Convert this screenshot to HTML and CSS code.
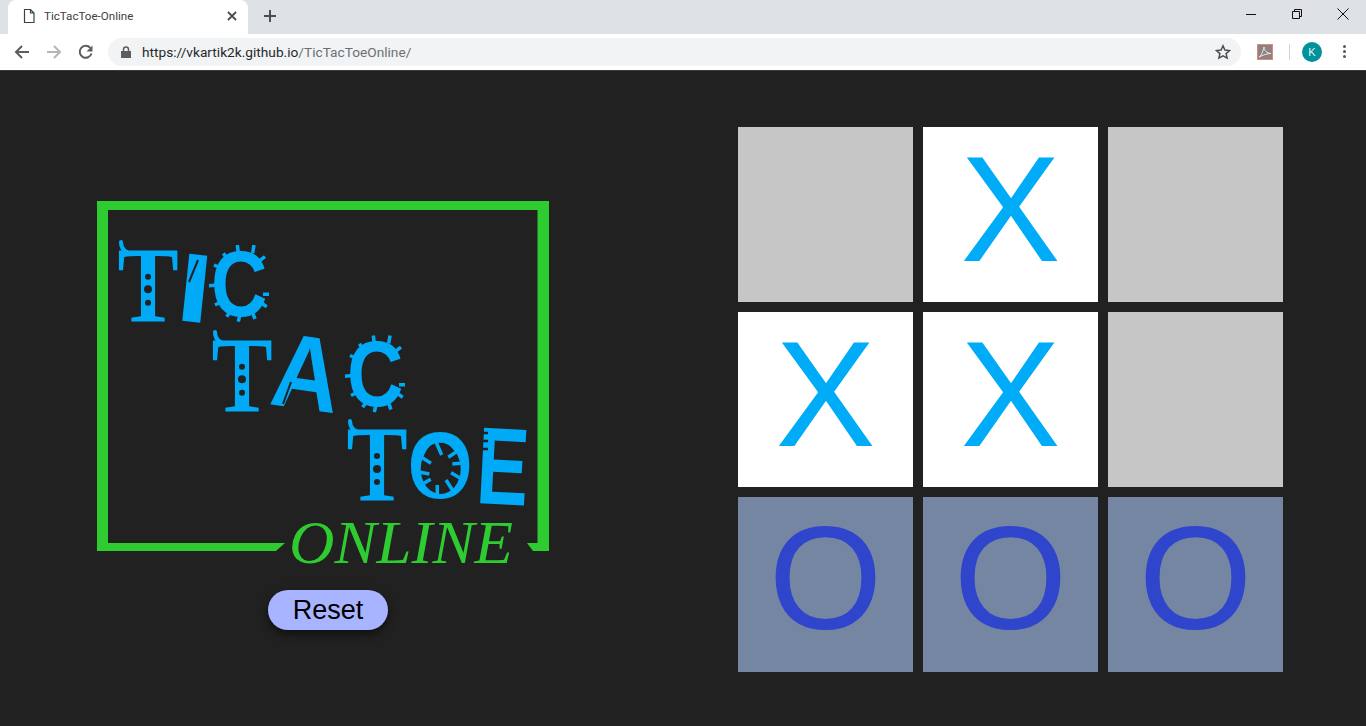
FILE: index.html
```html
<!DOCTYPE html>
<html lang="en">
<head>
<meta charset="utf-8">
<title>TicTacToe-Online</title>
<link rel="stylesheet" href="styles.css">
</head>
<body>
<div class="browser">
  <div class="tabstrip">
    <div class="tab">
      <svg class="tab-icon" width="16" height="16" viewBox="0 0 16 16"><path class="ic-thin" d="M3.500 1.500h6l3.500 3.500v9.500h-9.500zM9.500 1.500v3.500h3.500"/></svg>
      <span class="tab-title">TicTacToe-Online</span>
      <svg class="tab-close" width="10" height="10" viewBox="0 0 10 10"><path class="ic-x" d="M1 1l8 8M9 1l-8 8"/></svg>
    </div>
    <svg class="new-tab" width="14" height="14" viewBox="0 0 14 14"><path class="ic-plus" d="M7 1v12M1 7h12"/></svg>
    <div class="win-controls">
      <svg width="12" height="12" viewBox="0 0 12 12"><path class="ic-win" d="M1 6.500h10"/></svg>
      <svg width="12" height="12" viewBox="0 0 12 12"><path class="ic-win" d="M1.500 3.500h7v7h-7zM3.500 3.500v-2h7v7h-2"/></svg>
      <svg class="win-close" width="14" height="14" viewBox="0 0 14 14"><path class="ic-win" d="M1.500 1.500l11 11M12.500 1.500l-11 11"/></svg>
    </div>
  </div>
  <div class="toolbar">
    <svg class="nav" width="16" height="16" viewBox="0 0 16 16"><path class="ic-nav" d="M15 8H2M8 2L2 8l6 6"/></svg>
    <svg class="nav" width="16" height="16" viewBox="0 0 16 16"><path class="ic-nav ic-off" d="M1 8h13M8 2l6 6-6 6"/></svg>
    <svg class="nav" width="16" height="16" viewBox="0 0 16 16"><path class="ic-nav" d="M13.500 9.500A6 6 0 1 1 12.300 3.800"/><path class="ic-fill" d="M14.500 1.500v6h-6z"/></svg>
    <div class="omnibox">
      <svg class="lock" width="10" height="12" viewBox="0 0 10 12"><path class="ic-fill" d="M0 5h10v7H0z"/><path class="ic-lock" d="M2.500 5V3.400a2.500 2.500 0 0 1 5 0V5"/></svg>
      <span class="url"><span class="url-main">https://vkartik2k.github.io</span>/TicTacToeOnline/</span>
      <svg class="star" width="16" height="16" viewBox="0 0 16 16"><path class="ic-star" d="M8 1.800l1.900 4.200 4.600.5-3.400 3.100 1 4.500L8 11.800l-4.100 2.300 1-4.500-3.400-3.100 4.600-.5z"/></svg>
    </div>
    <div class="pdf-ext"><svg width="14" height="14" viewBox="0 0 14 14"><path class="ic-pdf" d="M1 12c2-1 4-5 5-10 .5 4 2.500 6 7 6.500-4 0-8 1.500-12 3.500z"/></svg></div>
    <div class="divider"></div>
    <div class="avatar">K</div>
    <div class="menu-dots"><i></i><i></i><i></i></div>
  </div>
</div>
<main class="page">
  <section class="side">
    <svg class="logo" width="462" height="379" viewBox="0 0 462 379">
      <path class="frame" d="M0 0H452V350H436L430 342H440.500V9H11V342H188L179 350H0z"/>

      <text class="lt-serif" transform="translate(20.400 120) scale(.85 1)">T</text>
      <path class="flourish" d="M24 41c0 8 5 11 12 12"/>
      <circle class="hole" cx="51" cy="75.700" r="3"/><circle class="hole" cx="51" cy="88.300" r="4"/><circle class="hole" cx="51" cy="101.700" r="3"/>
      <text class="lt" transform="translate(77 119) rotate(6) scale(1.250 .98)">I</text>
      <path class="holeline" d="M101 59l-9 22"/>
      <text class="lt" transform="translate(114 115) scale(.78 .93)">C</text>
      <path class="spikes" transform="translate(143 82.500)" d="M-2.700-38.500l1 8M14-38.500l-1.300 8M-16.700-30.200l4 5M25-26.800l-6 4.500M-26-18.500l7 3M-31 2.200l8-.7M-25 21.500l6-3M-13.300 33.200l3.300-5M-1.700 38.200L0 31M15 35.500l-2.300-6M26.700 23.200l-5-3.400M29 10.800h-6"/>

      <text class="lt-serif" transform="translate(114.400 210) scale(.85 1)">T</text>
      <path class="flourish" d="M118 131c0 8 5 11 12 12"/>
      <circle class="hole" cx="145" cy="165.700" r="3"/><circle class="hole" cx="145" cy="178.300" r="4"/><circle class="hole" cx="145" cy="191.700" r="3"/>
      <text class="lt" transform="translate(171 203) rotate(8) scale(.94 1.050)">A</text>
      <path class="holeline" d="M194 181l-8 22"/>
      <text class="lt" transform="translate(250 205) scale(.78 .93)">C</text>
      <path class="spikes" transform="translate(279 173)" d="M-2.700-38.500l1 8M14-38.500l-1.300 8M-16.700-30.200l4 5M25-26.800l-6 4.500M-26-18.500l7 3M-31 2.200l8-.7M-25 21.500l6-3M-13.300 33.200l3.300-5M-1.700 38.200L0 31M15 35.500l-2.300-6M26.700 23.200l-5-3.400M29 10.800h-6"/>

      <text class="lt-serif" transform="translate(249.400 299) scale(.85 1)">T</text>
      <path class="flourish" d="M253 220c0 8 5 11 12 12"/>
      <circle class="hole" cx="280" cy="255" r="3"/><circle class="hole" cx="280" cy="268" r="4"/><circle class="hole" cx="280" cy="281" r="3"/>
      <text class="lt" transform="translate(310.600 297) scale(.84 .95)">O</text>
      <ellipse class="o-hole" cx="343.700" cy="268" rx="20" ry="25"/>
      <path class="spokes" d="M339 241l5.700 13M362 249l-10.700 7.300M366 262l-10.700 1M363 277l-9-5.300M356 290l-7-11M340.300 295v-11M324 284l9.700-5.700M322 271l10.300 2M324 256l10 6.300"/>
      <text class="lt" transform="translate(378 302) rotate(3) scale(.78 1.100)">E</text>
      <path class="e-notch" d="M382 232h9M382 240h9M382 248h9"/>

      <text class="online" x="192" y="362" textLength="224" lengthAdjust="spacingAndGlyphs">ONLINE</text>
    </svg>
    <button class="reset" type="button">Reset</button>
  </section>
  <section class="board">
    <div class="cell"></div>
    <div class="cell x">X</div>
    <div class="cell"></div>
    <div class="cell x">X</div>
    <div class="cell x">X</div>
    <div class="cell"></div>
    <div class="cell o">O</div>
    <div class="cell o">O</div>
    <div class="cell o">O</div>
  </section>
</main>
</body>
</html>
```
FILE: styles.css
```css
* { box-sizing: border-box; }
html, body { margin: 0; height: 100%; overflow: hidden; }
body { background: #212121; font-family: "Liberation Sans", Arial, sans-serif; display: flex; flex-direction: column; }

.tabstrip { height: 34px; background: #dee1e6; display: flex; align-items: flex-start; }
.tab { width: 240px; height: 34px; margin-left: 8px; background: #fff; border-radius: 8px 8px 0 0; display: flex; align-items: center; padding: 0 11px 2px 14px; }
.tab-icon { margin-left: -1px; }
.tab-title { font: 11.600px Roboto, "Liberation Sans", sans-serif; color: #3c4043; margin-left: 7px; flex: 1; }
.new-tab { margin: 9px 0 0 15px; }
.win-controls { margin-left: auto; display: flex; align-items: center; gap: 34px; padding: 7px 16px 0 0; }
.win-close { margin-left: -1px; }
.ic-thin { fill: none; stroke: #3c4043; stroke-width: 1.200; }
.ic-x { fill: none; stroke: #4a4d51; stroke-width: 1.800; }
.ic-plus { fill: none; stroke: #4a4d51; stroke-width: 2; }
.ic-win { fill: none; stroke: #111; stroke-width: 1; }

.toolbar { height: 37px; background: #fff; display: flex; align-items: center; border-bottom: 1px solid #3a3a3a; padding: 0 0 1px 14px; }
.nav { margin-right: 16px; }
.ic-nav { fill: none; stroke: #5a5d61; stroke-width: 2; }
.ic-off { stroke: #b4b7ba; }
.ic-fill { fill: #5a5d61; }
.ic-lock { fill: none; stroke: #5a5d61; stroke-width: 1.500; }
.omnibox { width: 1133px; height: 28px; margin-left: -2px; background: #f1f3f4; border-radius: 14px; display: flex; align-items: center; padding: 0 10px 0 13px; }
.url { font: 13.700px Roboto, "Liberation Sans", sans-serif; color: #6b7075; margin-left: 11px; flex: 1; white-space: nowrap; }
.url-main { color: #26292c; }
.ic-star { fill: none; stroke: #4a4d51; stroke-width: 1.500; }
.pdf-ext { width: 16px; height: 16px; margin-left: 16px; background: #8d8281; border: 1px solid #d98a7e; display: flex; align-items: center; justify-content: center; }
.ic-pdf { fill: none; stroke: #efe7e5; stroke-width: 1; }
.divider { width: 1px; height: 16px; background: #d0d2d4; margin-left: 16px; }
.avatar { width: 20px; height: 20px; border-radius: 50%; background: #00929c; color: #e8f6f6; font-size: 11px; display: flex; align-items: center; justify-content: center; margin-left: 12px; }
.menu-dots { display: flex; flex-direction: column; gap: 2px; margin-left: 21px; }
.menu-dots i { width: 3px; height: 3px; border-radius: 50%; background: #55585c; display: block; }

.page { flex: 1; display: flex; align-items: flex-start; min-height: 0; }
.side { width: 738px; padding: 130px 0 0 97px; display: flex; flex-direction: column; align-items: flex-start; }
.logo { display: block; }
.frame { fill: #2ecc31; }
.lt { font: 700 100px "Liberation Sans", sans-serif; fill: #00aaf7; }
.lt-serif { font: 700 108px "Liberation Serif", serif; fill: #00aaf7; }
.flourish { fill: none; stroke: #00aaf7; stroke-width: 4; stroke-linecap: round; }
.hole { fill: #212121; }
.holeline { fill: none; stroke: #212121; stroke-width: 2; }
.spikes { fill: none; stroke: #00aaf7; stroke-width: 3.500; }
.o-hole { fill: #212121; }
.spokes { fill: none; stroke: #00aaf7; stroke-width: 3.500; }
.e-notch { fill: none; stroke: #212121; stroke-width: 2.500; }
.online { font: italic 400 62px "Liberation Serif", serif; fill: #2ecc31; }
.reset { width: 120px; height: 40px; margin: 10px 0 0 171px; padding: 0; border: 0; border-radius: 20px; background: #a8b4ff; color: #000; font: 27px "Liberation Sans", sans-serif; box-shadow: 0 4px 10px rgba(0, 0, 0, .55); }

.board { margin-top: 56px; display: grid; grid-template-columns: repeat(3, 175px); grid-auto-rows: 175px; gap: 10px; }
.cell { background: #c6c6c6; display: flex; align-items: center; justify-content: center; padding-bottom: 12px; font: 150px/1 "Liberation Sans", sans-serif; }
.x { background: #fff; color: #00acf8; }
.o { background: #7586a3; color: #2f45cc; font-size: 146px; }
```
